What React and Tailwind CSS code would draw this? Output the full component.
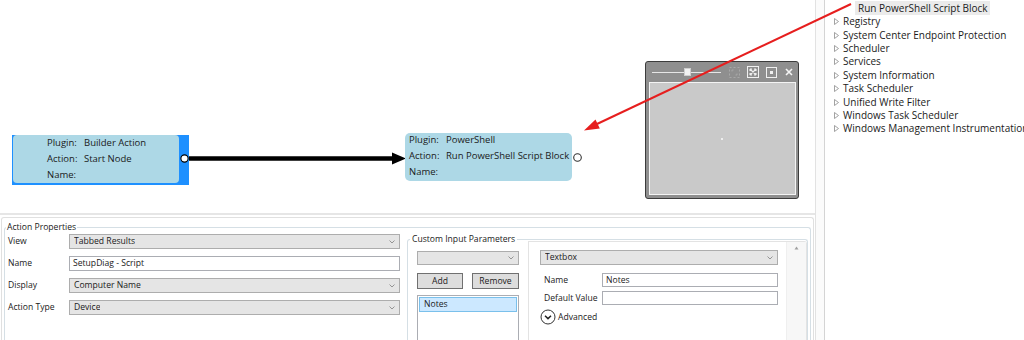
import React from 'react';

const TREE_ITEMS = [
  'Registry',
  'System Center Endpoint Protection',
  'Scheduler',
  'Services',
  'System Information',
  'Task Scheduler',
  'Unified Write Filter',
  'Windows Task Scheduler',
  'Windows Management Instrumentation',
];

function Chevron() {
  return (
    <svg width="6" height="4" viewBox="0 0 6 4" className="shrink-0">
      <path d="M0.5 0.5 L3 3 L5.5 0.5" fill="none" stroke="#8a8a8a" strokeWidth="0.9" />
    </svg>
  );
}

function Combo({ value, className = '' }) {
  return (
    <div
      className={`flex items-center justify-between border border-[#adadad] bg-[#e5e5e5] pl-[4px] pr-[4px] ${className}`}
    >
      <span className="truncate">{value}</span>
      <Chevron />
    </div>
  );
}

function TextBox({ value, className = '' }) {
  return (
    <div className={`flex items-center border border-[#abadb3] bg-white pl-[3px] ${className}`}>
      {value}
    </div>
  );
}

function NodeFields({ plugin, action }) {
  return (
    <div className="grid grid-cols-[37px_auto] leading-[16px] text-[9.5px] text-[#1a1a1a]">
      <span>Plugin:</span>
      <span>{plugin}</span>
      <span>Action:</span>
      <span>{action}</span>
      <span>Name:</span>
      <span />
    </div>
  );
}

function PreviewWindow() {
  return (
    <div className="absolute left-[645px] top-[61px] w-[154px] h-[138px] flex flex-col bg-[#8f8f8f] border-[1.5px] border-[#3c3c3c] rounded-[3px]">
      <div className="h-[20px] flex items-center pl-[6px] pr-[5px]">
        <div className="relative w-[70px] h-[8px] flex items-center">
          <div className="w-full h-[1px] bg-[#e6e6e6]" />
          <div className="absolute left-[32px] top-0 w-[7px] h-[8px] bg-[#f2f2f2] border border-[#cfcfcf]" />
        </div>
        <div className="ml-[8px] flex items-center gap-[7px]">
          <svg width="11" height="11" viewBox="0 0 11 11">
            <rect x="0.5" y="0.5" width="10" height="10" fill="none" stroke="#a8a8a8" strokeDasharray="2 2" />
            <path d="M3 3 L3 4.5 M3 3 L4.5 3 M8 8 L8 6.5 M8 8 L6.5 8" stroke="#a8a8a8" />
          </svg>
          <svg width="12" height="12" viewBox="0 0 12 12">
            <rect x="0.5" y="0.5" width="11" height="11" fill="none" stroke="#f0f0f0" />
            <path d="M3 3 L9 9 M9 3 L3 9 M3 3 L5 3 M3 3 L3 5 M9 9 L7 9 M9 9 L9 7 M9 3 L7 3 M9 3 L9 5 M3 9 L5 9 M3 9 L3 7" stroke="#f0f0f0" strokeWidth="1.1" />
          </svg>
          <svg width="11" height="11" viewBox="0 0 11 11">
            <rect x="0.5" y="0.5" width="10" height="10" fill="none" stroke="#f0f0f0" />
            <rect x="4" y="4" width="3" height="3" fill="#f0f0f0" />
          </svg>
          <svg width="8" height="8" viewBox="0 0 8 8" className="ml-[1px]">
            <path d="M1 1 L7 7 M7 1 L1 7" stroke="#f5f5f5" strokeWidth="1.6" />
          </svg>
        </div>
      </div>
      <div className="flex-1 mx-[2.5px] mb-[3px] bg-[#c9c9c9] border border-[#f4f4f4] flex items-center justify-center">
        <div className="w-[2px] h-[2px] bg-[#eeeeee]" />
      </div>
    </div>
  );
}

function Canvas() {
  return (
    <div className="relative h-[213px] shrink-0 bg-white">
      <svg className="absolute left-0 top-0" width="815" height="213">
        <line x1="188" y1="158.5" x2="394" y2="158.5" stroke="#000" strokeWidth="4.5" />
        <polygon points="392,152.5 406,158.5 392,164.5" fill="#000" />
      </svg>

      <div className="absolute left-[12px] top-[135px] w-[177px] h-[50px] bg-[#1e90ff] p-[1px] pr-[10px]">
        <div className="h-full bg-[#add8e6] rounded-[4px] pl-[34px]">
          <div className="-mt-[1px]">
            <NodeFields plugin="Builder Action" action="Start Node" />
          </div>
        </div>
      </div>

      <div className="absolute left-[405px] top-[133px] w-[167px] h-[48px] bg-[#add8e6] rounded-[5px] pl-[4px]">
        <div className="-mt-[1px]">
          <NodeFields plugin="PowerShell" action="Run PowerShell Script Block" />
        </div>
      </div>

      <svg className="absolute left-0 top-0" width="815" height="213">
        <circle cx="184.5" cy="158.5" r="3.6" fill="#fff" stroke="#000" strokeWidth="1.1" />
        <circle cx="577.5" cy="157.5" r="3.8" fill="#fff" stroke="#333" strokeWidth="1.1" />
      </svg>

      <PreviewWindow />
    </div>
  );
}

function ActionProperties() {
  const rows = [
    { label: 'View', type: 'combo', value: 'Tabbed Results' },
    { label: 'Name', type: 'text', value: 'SetupDiag - Script' },
    { label: 'Display', type: 'combo', value: 'Computer Name' },
    { label: 'Action Type', type: 'combo', value: 'Device' },
  ];
  return (
    <div className="w-[402px] shrink-0 flex flex-col gap-[7px] pt-[1px]">
      {rows.map((row) => (
        <div key={row.label} className="flex items-center">
          <span className="w-[64px] pl-[3px] text-[#1a1a1a]">{row.label}</span>
          {row.type === 'combo' ? (
            <Combo value={row.value} className="w-[331px] h-[15px]" />
          ) : (
            <TextBox value={row.value} className="w-[331px] h-[15px]" />
          )}
        </div>
      ))}
    </div>
  );
}

function CustomInputParameters() {
  return (
    <fieldset className="flex-1 mt-0 mr-[2px] border border-b-0 border-[#d5dfe5] rounded-t-[3px] flex">
      <legend className="ml-[2px] px-[2px] leading-[12px] text-[#1a1a1a]">Custom Input Parameters</legend>
      <div className="w-[102px] shrink-0 ml-[9px] pt-[6px] flex flex-col">
        <Combo value="" className="h-[14px]" />
        <div className="mt-[8px] flex justify-between">
          <button className="w-[46px] h-[16px] border border-[#707070] bg-[#dddddd] leading-[14px] text-[#1a1a1a]">
            Add
          </button>
          <button className="w-[47px] h-[16px] border border-[#707070] bg-[#dddddd] leading-[14px] text-[#1a1a1a]">
            Remove
          </button>
        </div>
        <div className="mt-[6px] h-[60px] border border-[#abadb3] bg-white p-[1px]">
          <div className="h-[15px] bg-[#cce8ff] border border-[#7ac0eb] pl-[4px] leading-[13px]">Notes</div>
        </div>
      </div>
      <div className="flex-1 ml-[9px] -mt-[4px] border border-[#e3e3e3] border-b-0 rounded-tr-[3px] flex">
        <div className="flex-1 pl-[11px] pr-[8px] pt-[8px] flex flex-col">
          <Combo value="Textbox" className="h-[15px]" />
          <div className="mt-[8px] flex items-center">
            <span className="w-[62px] pl-[4px]">Name</span>
            <TextBox value="Notes" className="flex-1 h-[14px]" />
          </div>
          <div className="mt-[4px] flex items-center">
            <span className="w-[62px] pl-[4px] whitespace-nowrap">Default Value</span>
            <TextBox value="" className="flex-1 h-[14px]" />
          </div>
          <div className="mt-[4px] flex items-center gap-[2px]">
            <svg width="16" height="16" viewBox="0 0 16 16">
              <circle cx="8" cy="8" r="7" fill="#fff" stroke="#333" strokeWidth="1" />
              <path d="M5 6.8 L8 9.6 L11 6.8" fill="none" stroke="#222" strokeWidth="1.5" />
            </svg>
            <span>Advanced</span>
          </div>
        </div>
        <div className="w-[20px] bg-[#f7f7f7] border-l border-[#efefef] flex justify-center pt-[4px]">
          <svg width="5" height="4" viewBox="0 0 5 4">
            <polygon points="2.5,0.5 4.5,3.5 0.5,3.5" fill="#a0a0a0" />
          </svg>
        </div>
      </div>
    </fieldset>
  );
}

function BottomPanel() {
  return (
    <div className="flex-1 min-h-0 border-t-[2px] border-[#e6e6e6] pt-[2px] px-[1px] text-[8.6px]">
      <div className="h-full border border-b-0 border-[#e0e0e0] rounded-t-[3px] pt-[3px] px-[2px]">
        <fieldset className="h-full border border-b-0 border-[#d5dfe5] rounded-t-[3px] flex items-start">
          <legend className="ml-[1px] px-[1px] leading-[12px] text-[#1a1a1a]">Action Properties</legend>
          <ActionProperties />
          <CustomInputParameters />
        </fieldset>
      </div>
    </div>
  );
}

function TreePanel() {
  return (
    <div className="flex-1 border-l border-[#d4d4d4] bg-white pt-[1px] text-[10px] text-[#1a1a1a]">
      <div className="ml-[30px] w-[135px] h-[14px] bg-[#ebebeb] pl-[3px] leading-[14px] whitespace-nowrap">
        Run PowerShell Script Block
      </div>
      {TREE_ITEMS.map((item) => (
        <div key={item} className="flex items-center h-[13.4px] pl-[9px] whitespace-nowrap">
          <svg width="5" height="7" viewBox="0 0 5 7" className="shrink-0">
            <polygon points="0.5,0.5 4.5,3.5 0.5,6.5" fill="none" stroke="#8c8c8c" strokeWidth="0.8" />
          </svg>
          <span className="ml-[4px]">{item}</span>
        </div>
      ))}
    </div>
  );
}

export default function App() {
  return (
    <div className="relative w-[1024px] h-[340px] overflow-hidden flex bg-white font-['Open_Sans',sans-serif] text-[9.5px] text-[#1a1a1a]">
      <div className="w-[816px] shrink-0 flex flex-col border-r border-[#e2e2e2]">
        <Canvas />
        <BottomPanel />
      </div>
      <div className="w-[8px] shrink-0 bg-[#fbfbfb]" />
      <TreePanel />

      <svg className="absolute left-0 top-0 pointer-events-none" width="1024" height="340">
        <line x1="851" y1="4" x2="597" y2="124" stroke="#e61e1e" strokeWidth="2" />
        <polygon points="584,130.5 599.8,128.5 595.5,119.5" fill="#e61e1e" />
      </svg>
    </div>
  );
}
